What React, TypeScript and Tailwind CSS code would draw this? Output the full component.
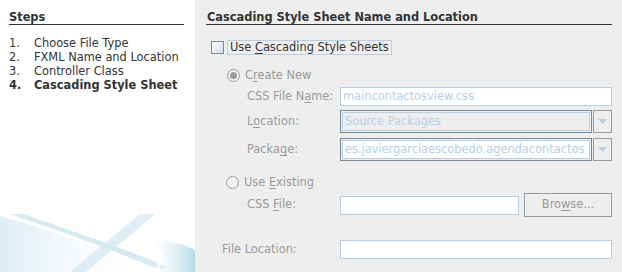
import { FC, ReactNode } from 'react';

const font = { fontFamily: '"DejaVu Sans", Verdana, sans-serif' };

// underlines the mnemonic letter at position idx
const Mn: FC<{ text: string; idx: number }> = ({ text, idx }) => (
  <>
    {text.slice(0, idx)}
    <span className="underline underline-offset-2">{text[idx]}</span>
    {text.slice(idx + 1)}
  </>
);

const Radio: FC<{ checked?: boolean }> = ({ checked }) => (
  <span className="flex h-[13px] w-[13px] items-center justify-center rounded-full border border-[#9a9a9a] bg-[#f2f2f2]">
    {checked && <span className="h-[7px] w-[7px] rounded-full bg-[#9a9a9a]" />}
  </span>
);

const Field: FC<{ value?: string; className?: string }> = ({ value = '', className = '' }) => (
  <div
    className={`flex h-[19px] items-center border border-[#b8cfe5] bg-white px-[2px] text-[11.4px] text-[#b8cfe5] ${className}`}
  >
    {value}
  </div>
);

const Combo: FC<{ value: string; filled?: boolean }> = ({ value, filled }) => (
  <div className="flex h-[23px] flex-1 gap-[1px]">
    <div className="flex-1 border border-[#7a8a99] p-[1px]">
      <div
        className={`flex h-full items-center border border-[#b8cfe5] px-[2px] text-[11.4px] text-[#b8cfe5] ${
          filled ? 'bg-white' : 'bg-[#eeeeee]'
        }`}
      >
        {value}
      </div>
    </div>
    <div className="flex w-[19px] items-center justify-center border border-[#9a9a9a]">
      <svg width="9" height="5" viewBox="0 0 9 5">
        <polygon points="0,0 9,0 4.5,5" fill="#b8cfe5" />
      </svg>
    </div>
  </div>
);

const Row: FC<{ label: ReactNode; labelWidth: string; children: ReactNode; className?: string }> = ({
  label,
  labelWidth,
  children,
  className = '',
}) => (
  <div className={`flex items-center ${className}`}>
    <span className={`${labelWidth} shrink-0 text-[11.4px] text-[#9a9a9a]`}>{label}</span>
    <div className="flex flex-1 items-center">{children}</div>
  </div>
);

const Swoosh: FC = () => (
  <svg width="195" height="66" viewBox="0 0 195 66" className="block">
    <defs>
      <linearGradient id="fadeL" x1="0" y1="0" x2="1" y2="0">
        <stop offset="0" stopColor="#dcedf4" />
        <stop offset="1" stopColor="#ffffff" stopOpacity="0" />
      </linearGradient>
      <linearGradient id="fadeR" x1="0" y1="0" x2="1" y2="0">
        <stop offset="0" stopColor="#ffffff" stopOpacity="0" />
        <stop offset="1" stopColor="#b5dbe8" />
      </linearGradient>
    </defs>
    <path d="M0 10 C 50 25, 110 45, 160 66 L 0 66 Z" fill="url(#fadeL)" />
    <path d="M10 8 L 24 8 C 70 25, 120 40, 165 60 L 160 64 C 115 45, 60 25, 10 8 Z" fill="#d7eaf2" />
    <path d="M140 8 L 155 8 C 130 30, 105 50, 85 66 L 70 66 C 95 45, 120 25, 140 8 Z" fill="#d7eaf2" opacity="0.8" />
    <path d="M142 32 C 165 34, 185 38, 195 44 L 195 66 L 160 66 C 168 55, 165 42, 142 32 Z" fill="url(#fadeR)" />
    <path d="M150 45 C 158 50, 162 56, 160 66 L 156 66 C 158 57, 156 51, 150 45 Z" fill="#ffffff" opacity="0.8" />
  </svg>
);

export default function App() {
  return (
    <div className="flex h-[272px] w-[622px] overflow-hidden text-[#333333]" style={font}>
      <aside className="flex w-[195px] shrink-0 flex-col bg-white">
        <div className="pl-[9px] pr-[11px] pt-[10px]">
          <h2 className="border-b border-[#333333] text-[11.4px] font-bold leading-[14px]">Steps</h2>
          <ol className="mt-[11px] text-[11.4px] leading-[14px]">
            <li className="flex"><span className="w-[25px]">1.</span>Choose File Type</li>
            <li className="flex"><span className="w-[25px]">2.</span>FXML Name and Location</li>
            <li className="flex"><span className="w-[25px]">3.</span>Controller Class</li>
            <li className="flex font-bold"><span className="w-[25px]">4.</span>Cascading Style Sheet</li>
          </ol>
        </div>
        <div className="mt-auto">
          <Swoosh />
        </div>
      </aside>

      <main className="flex-1 bg-[#eeeeee] pl-[11px] pr-[10px] pt-[10px]">
        <h1 className="border-b border-[#333333] pl-[1px] text-[11.4px] font-bold leading-[14px]">
          Cascading Style Sheet Name and Location
        </h1>

        <div className="mt-[15px] flex items-center pl-[5px]">
          <span className="h-[13px] w-[13px] border border-[#7a8a99] bg-gradient-to-br from-white to-[#d5dfe9]" />
          <span className="ml-[3px] border border-[#b8cfe5] px-[2px] text-[11.4px] leading-[13px]">
            Use <Mn text="Cascading" idx={0} /> Style Sheets
          </span>
        </div>

        <div className="mt-[13px] flex items-center gap-[5px] pl-[21px] text-[11.4px] leading-[14px] text-[#9a9a9a]">
          <Radio checked />
          <span>
            C<span className="underline underline-offset-2">r</span>eate New
          </span>
        </div>

        <div className="mt-[5px] pl-[41px]">
          <Row label={<>CSS File N<span className="underline underline-offset-2">a</span>me:</>} labelWidth="w-[93px]">
            <Field value="maincontactosview.css" className="flex-1" />
          </Row>
          <Row label={<>L<span className="underline underline-offset-2">o</span>cation:</>} labelWidth="w-[93px]" className="mt-[4px]">
            <Combo value="Source Packages" />
          </Row>
          <Row label={<>Packa<span className="underline underline-offset-2">g</span>e:</>} labelWidth="w-[93px]" className="mt-[5px]">
            <Combo value="es.javiergarciaescobedo.agendacontactos" filled />
          </Row>
        </div>

        <div className="mt-[14px] flex items-center gap-[5px] pl-[20px] text-[11.4px] leading-[14px] text-[#9a9a9a]">
          <Radio />
          <span>
            Use <Mn text="Existing" idx={0} />
          </span>
        </div>

        <div className="mt-[4px] pl-[41px]">
          <Row label={<>CSS <Mn text="File" idx={0} />:</>} labelWidth="w-[93px]">
            <Field className="w-[179px]" />
            <div className="ml-[5px] flex h-[24px] flex-1 items-center justify-center border border-[#9a9a9a] text-[11.4px] text-[#9a9a9a]">
              Bro<span className="underline underline-offset-2">w</span>se...
            </div>
          </Row>
        </div>

        <div className="mt-[23px] pl-[16px]">
          <Row label="File Location:" labelWidth="w-[118px]">
            <Field className="flex-1" />
          </Row>
        </div>
      </main>
    </div>
  );
}
